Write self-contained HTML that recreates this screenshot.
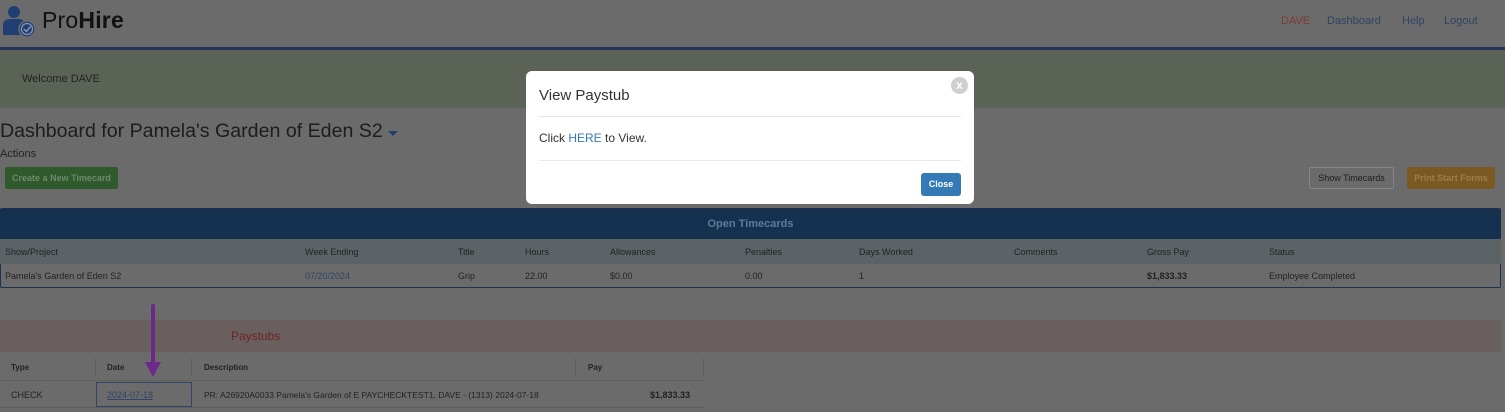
<!DOCTYPE html>
<html><head><meta charset="utf-8"><style>
*{margin:0;padding:0;box-sizing:border-box}
body{width:1505px;height:412px;overflow:hidden;background:#6b6b6b;font-family:"Liberation Sans",sans-serif;position:relative;color:#1e1e1e}
.a{position:absolute;white-space:nowrap}
.s{font-size:9px;color:#222}
</style></head><body>
<svg class="a" style="left:3px;top:5px" width="32" height="32" viewBox="0 0 32 32">
<circle cx="11" cy="7" r="6" fill="#1f3f72"/>
<path d="M0 30 V20 Q0 14 8 14 H16 Q20 14 21 17 L21 30 Z" fill="#1f3f72"/>
<circle cx="24" cy="24" r="8" fill="#1f3f72" stroke="#6b6b6b" stroke-width="1.5"/>
<circle cx="24" cy="24" r="5.5" fill="none" stroke="#8a96b5" stroke-width="1.2"/>
<path d="M21 24 L23.5 26.5 L27.5 21.5" fill="none" stroke="#8a96b5" stroke-width="1.5"/>
</svg>
<div class="a" style="left:42px;top:7px;font-size:23px;color:#111;letter-spacing:0.2px">Pro<b>Hire</b></div>
<div class="a" style="left:1281px;top:15px;font-size:11px;color:#7c3a30">DAVE</div>
<div class="a" style="left:1327px;top:15px;font-size:11px;color:#2f4466">Dashboard</div>
<div class="a" style="left:1402px;top:15px;font-size:11px;color:#2f4466">Help</div>
<div class="a" style="left:1444px;top:15px;font-size:11px;color:#2f4466">Logout</div>
<div class="a" style="left:0;top:47px;width:1505px;height:3px;background:#26345e"></div>
<div class="a" style="left:0;top:50px;width:1505px;height:58px;background:#5b6357"></div>
<div class="a" style="left:22px;top:73px;font-size:11px;color:#222">Welcome DAVE</div>
<div class="a" style="left:0;top:120px;font-size:19.6px;color:#1d1d1d">Dashboard for Pamela's Garden of Eden S2</div>
<div class="a" style="left:388px;top:131px;width:0;height:0;border-left:5px solid transparent;border-right:5px solid transparent;border-top:5px solid #1f3f72"></div>
<div class="a" style="left:0;top:148px;font-size:11px;color:#222">Actions</div>
<div class="a" style="left:5px;top:167px;width:113px;height:22px;background:#2e5a2c;border-radius:2px;color:#6f886d;font-size:9px;font-weight:bold;text-align:center;line-height:22px">Create a New Timecard</div>
<div class="a" style="left:1309px;top:167px;width:85px;height:22px;border:1px solid #858585;border-radius:2px;font-size:9px;text-align:center;line-height:20px;color:#1e1e1e">Show Timecards</div>
<div class="a" style="left:1407px;top:167px;width:88px;height:22px;background:#7a5a22;border-radius:2px;color:#9c7e4e;font-size:9px;font-weight:bold;text-align:center;line-height:22px">Print Start Forms</div>
<div class="a" style="left:0;top:208px;width:1501px;height:80px;border:1px solid #1c3250;border-radius:2px"></div>
<div class="a" style="left:0;top:209px;width:1501px;height:30px;background:#15314f;color:#5f7a95;font-size:11px;font-weight:bold;text-align:center;line-height:30px">Open Timecards</div>
<div class="a" style="left:0;top:239px;width:1501px;height:25px;background:#5b6367"></div>
<div class="a s" style="left:5px;top:247px">Show/Project</div>
<div class="a s" style="left:305px;top:247px">Week Ending</div>
<div class="a s" style="left:458px;top:247px">Title</div>
<div class="a s" style="left:525px;top:247px">Hours</div>
<div class="a s" style="left:610px;top:247px">Allowances</div>
<div class="a s" style="left:745px;top:247px">Penalties</div>
<div class="a s" style="left:859px;top:247px">Days Worked</div>
<div class="a s" style="left:1014px;top:247px">Comments</div>
<div class="a s" style="left:1147px;top:247px">Gross Pay</div>
<div class="a s" style="left:1269px;top:247px">Status</div>
<div class="a s" style="left:5px;top:271px">Pamela's Garden of Eden S2</div>
<div class="a s" style="left:305px;top:271px;color:#2f4466">07/20/2024</div>
<div class="a s" style="left:458px;top:271px">Grip</div>
<div class="a s" style="left:525px;top:271px">22.00</div>
<div class="a s" style="left:610px;top:271px">$0.00</div>
<div class="a s" style="left:745px;top:271px">0.00</div>
<div class="a s" style="left:859px;top:271px">1</div>
<div class="a s" style="left:1147px;top:271px;font-weight:bold">$1,833.33</div>
<div class="a s" style="left:1269px;top:271px">Employee Completed</div>
<div class="a" style="left:0;top:320px;width:1501px;height:32px;background:#6a5f5f"></div>
<div class="a" style="left:231px;top:329px;font-size:12px;color:#6e2424">Paystubs</div>
<div class="a" style="left:0;top:380px;width:704px;height:1px;background:#5e5e5e"></div>
<div class="a" style="left:0;top:407px;width:704px;height:1px;background:#5e5e5e"></div>
<div class="a" style="left:95px;top:358px;width:1px;height:18px;background:#5e5e5e"></div>
<div class="a" style="left:191px;top:358px;width:1px;height:18px;background:#5e5e5e"></div>
<div class="a" style="left:575px;top:358px;width:1px;height:18px;background:#5e5e5e"></div>
<div class="a" style="left:703px;top:358px;width:1px;height:18px;background:#5e5e5e"></div>
<div class="a" style="left:11px;top:363px;font-size:8px;font-weight:bold;color:#222">Type</div>
<div class="a" style="left:107px;top:363px;font-size:8px;font-weight:bold;color:#222">Date</div>
<div class="a" style="left:204px;top:363px;font-size:8px;font-weight:bold;color:#222">Description</div>
<div class="a" style="left:588px;top:363px;font-size:8px;font-weight:bold;color:#222">Pay</div>
<div class="a" style="left:96px;top:382px;width:96px;height:25px;border:1px solid #2f4466"></div>
<div class="a" style="left:11px;top:390px;font-size:9px;color:#222">CHECK</div>
<div class="a" style="left:107px;top:390px;font-size:9px;color:#2f4466;text-decoration:underline">2024-07-18</div>
<div class="a" style="left:204px;top:390px;font-size:8.5px;color:#222">PR: A26920A0033 Pamela's Garden of E PAYCHECKTEST1, DAVE - (1313) 2024-07-18</div>
<div class="a" style="left:650px;top:390px;font-size:9px;font-weight:bold;color:#222">$1,833.33</div>
<div class="a" style="left:151px;top:304px;width:4px;height:62px;background:#6b2a8a;border-radius:2px"></div>
<div class="a" style="left:145px;top:362px;width:0;height:0;border-left:8px solid transparent;border-right:8px solid transparent;border-top:15px solid #6b2a8a"></div>
<div class="a" style="left:526px;top:71px;width:448px;height:133px;background:#fff;border-radius:6px"></div>
<div class="a" style="left:951px;top:77px;width:17px;height:17px;border-radius:50%;background:#cfcfcf;color:#fff;font-size:12px;font-weight:bold;text-align:center;line-height:17px">x</div>
<div class="a" style="left:539px;top:87px;font-size:15px;color:#333">View Paystub</div>
<div class="a" style="left:539px;top:116px;width:422px;height:1px;background:#e8e8e8"></div>
<div class="a" style="left:539px;top:131px;font-size:12px;color:#333">Click <span style="color:#337ab7">HERE</span> to View.</div>
<div class="a" style="left:539px;top:160px;width:422px;height:1px;background:#e8e8e8"></div>
<div class="a" style="left:921px;top:173px;width:40px;height:23px;background:#337ab7;border-radius:3px;color:#fff;font-size:9px;font-weight:bold;text-align:center;line-height:23px">Close</div>
</body></html>
